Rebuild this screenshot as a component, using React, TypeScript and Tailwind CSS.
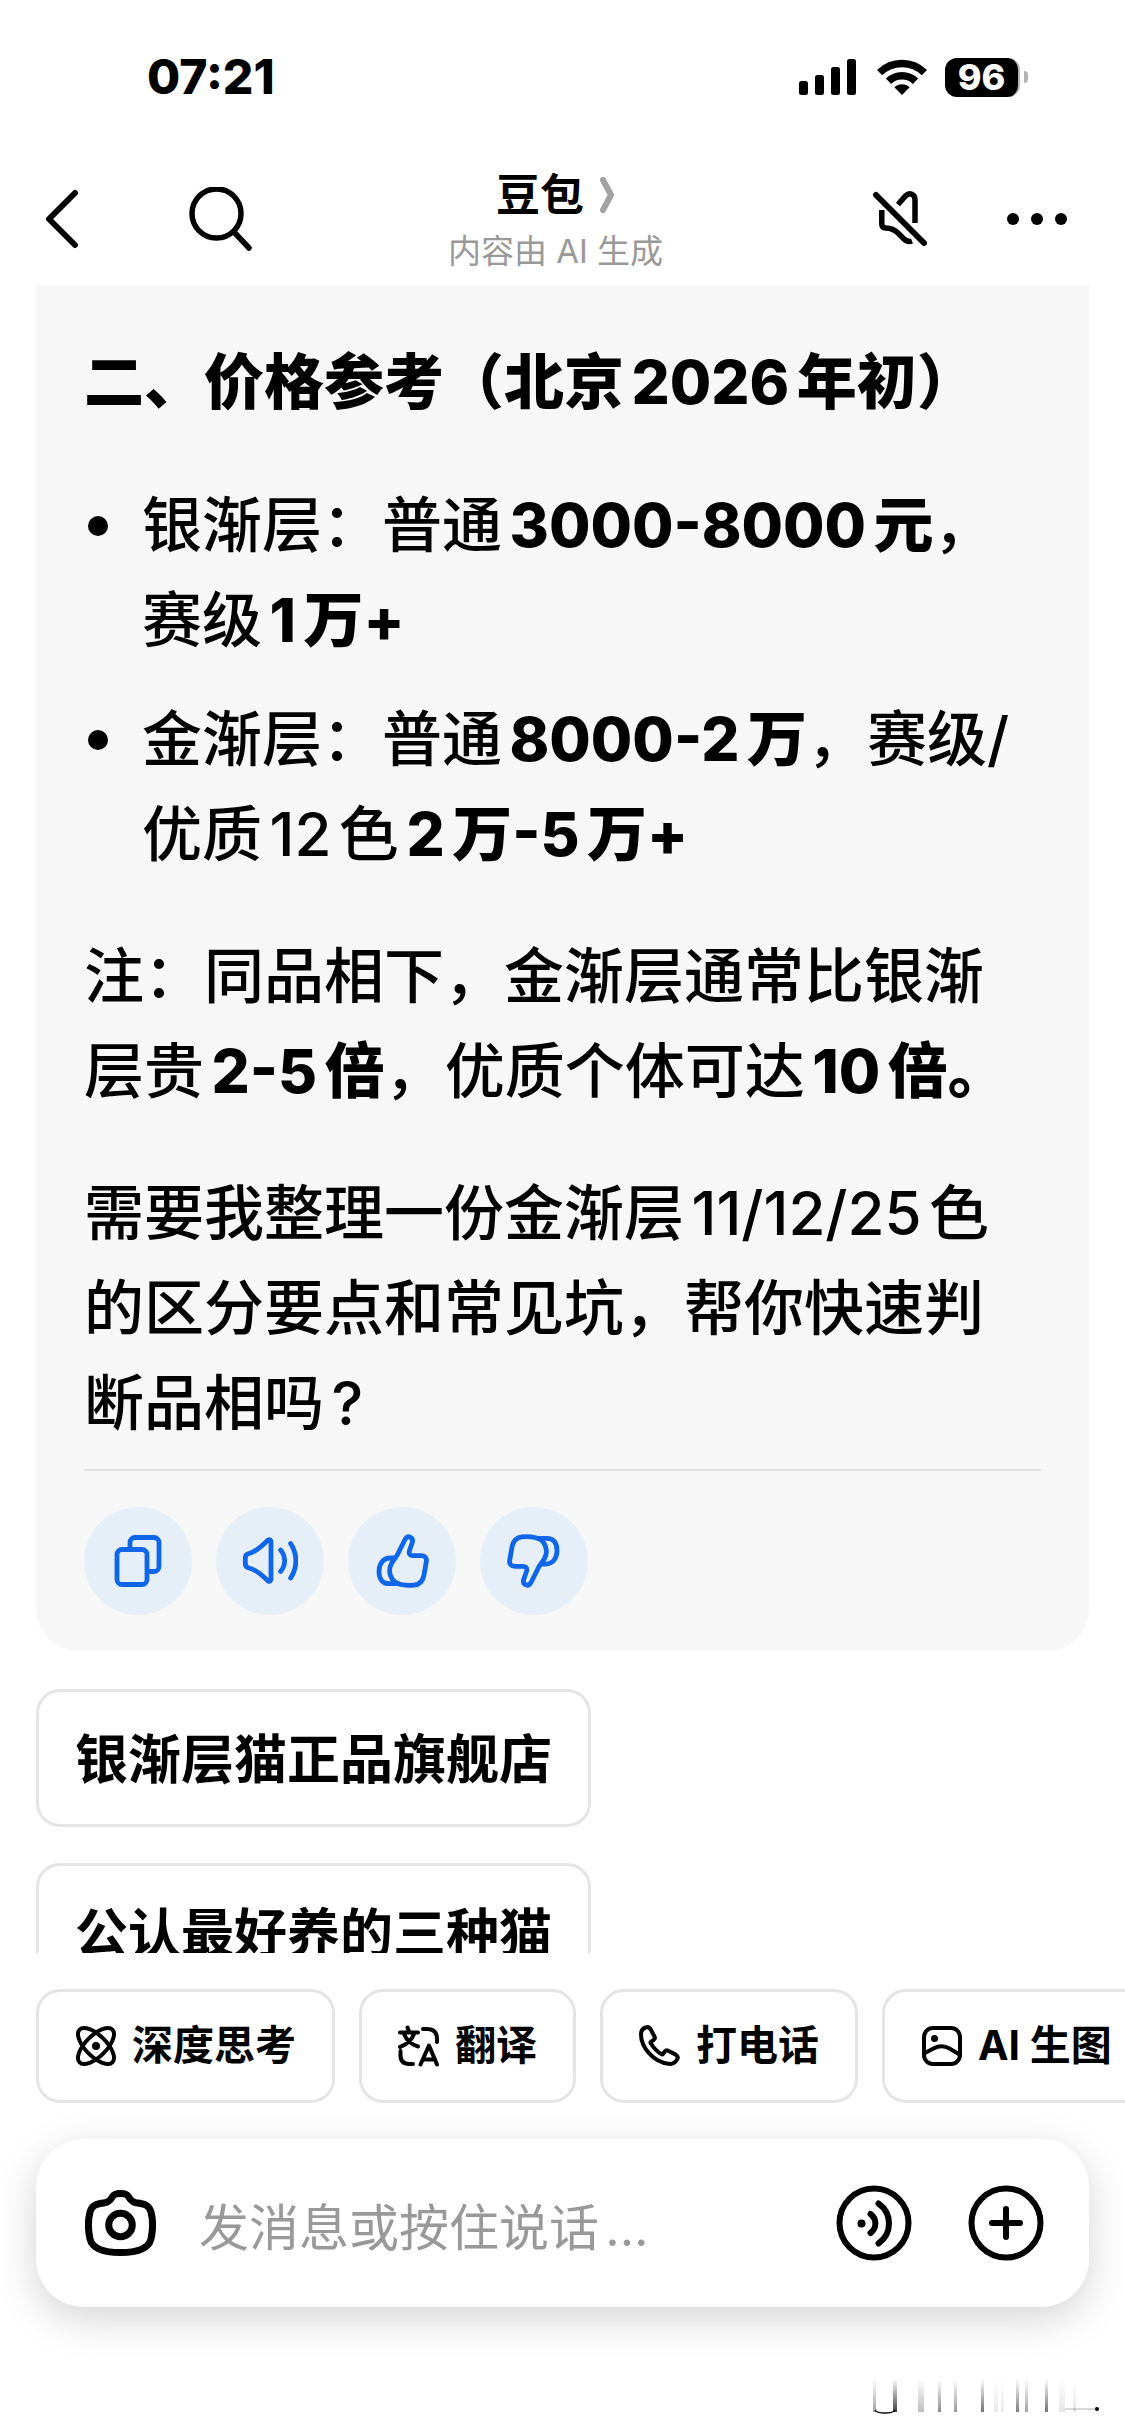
import type { ReactNode } from "react";

function StatusBar() {
  return (
    <div className="flex h-[154px] items-center justify-between pl-[147px] pr-[97px]">
      <span className="text-[48px] font-extrabold leading-none">07:21</span>
      <div className="flex items-center">
        <svg className="mr-5" width="58" height="36" viewBox="0 0 58 36">
          <rect x="0" y="22" width="9" height="14" rx="2.5" />
          <rect x="16" y="16" width="9" height="20" rx="2.5" />
          <rect x="32" y="8" width="9" height="28" rx="2.5" />
          <rect x="48" y="0" width="9" height="36" rx="2.5" />
        </svg>
        <svg className="mr-[18px]" width="50" height="36" viewBox="0 0 50 36">
          <path d="M25 36 17.3 28.3a11 11 0 0 1 15.4 0Z" />
          <path d="M11.5 22.3a19.3 19.3 0 0 1 27 0" fill="none" stroke="#000" strokeWidth="7.5" />
          <path d="M2.6 13.6a32 32 0 0 1 44.8 0" fill="none" stroke="#000" strokeWidth="7.5" />
        </svg>
        <div className="flex items-center">
          <span className="flex h-[39px] w-[75px] items-center justify-center rounded-[12px] border-r-2 border-[#b3b3b3] bg-black text-[36px] font-extrabold leading-none text-white">
            96
          </span>
          <span className="ml-1 h-3 w-1 rounded-r-full bg-[#b3b3b3]" />
        </div>
      </div>
    </div>
  );
}

function Header() {
  return (
    <header className="grid h-[131px] grid-cols-[1fr_auto_1fr] items-center pb-[2px] pl-[44px] pr-[58px]">
      <div className="flex items-center gap-[108px]">
        <button aria-label="返回">
          <svg width="36" height="60" viewBox="0 0 36 60" fill="none" stroke="#000" strokeWidth="6" strokeLinecap="round" strokeLinejoin="round">
            <path d="M31 4 5 30 31 56" />
          </svg>
        </button>
        <button aria-label="搜索">
          <svg width="64" height="64" viewBox="0 0 64 64" fill="none" stroke="#000" strokeWidth="5.5" strokeLinecap="round">
            <circle cx="28.5" cy="26.5" r="24.5" />
            <path d="m46 45 15 16" />
          </svg>
        </button>
      </div>
      <div className="flex flex-col items-center pt-2">
        <button className="flex items-center gap-4 text-[44px] font-bold leading-[56px]">
          豆包
          <svg width="15" height="36" viewBox="0 0 15 36" fill="none" stroke="#a3a3a3" strokeWidth="6" strokeLinecap="round" strokeLinejoin="round">
            <path d="m3 3 8 15-8 15" />
          </svg>
        </button>
        <p className="text-[33px] leading-[56px] text-[#999999]">内容由 AI 生成</p>
      </div>
      <div className="flex items-center justify-end gap-[80px]">
        <button aria-label="静音">
          <svg width="54" height="56" viewBox="0 0 54 56" fill="none" stroke="#000" strokeWidth="5.5">
            <path d="M3 4 51 52" strokeWidth="6" strokeLinecap="round" />
            <path d="m25 13.500 7.500-8.500c4-4 9.500-2 9.500 4V32" />
            <path d="M8.800 19v14c0 2.500 1.500 3.800 4.200 4 5.500.2 8 1.200 12 5l5.500 5.500c2.500 2.600 5 3.800 8.500 2.500" />
          </svg>
        </button>
        <button aria-label="更多">
          <svg width="60" height="12" viewBox="0 0 60 12">
            <circle cx="6" cy="6" r="6" />
            <circle cx="30" cy="6" r="6" />
            <circle cx="54" cy="6" r="6" />
          </svg>
        </button>
      </div>
    </header>
  );
}

function ActionIcon({ className, children }: { className?: string; children: ReactNode }) {
  return (
    <svg className={className} width="56" height="56" viewBox="0 0 56 56" fill="none" stroke="#0f66e8" strokeWidth="4.8" strokeLinecap="round" strokeLinejoin="round">
      {children}
    </svg>
  );
}

function ThumbIcon({ className }: { className?: string }) {
  return (
    <ActionIcon className={className}>
      <path d="M31 6.500c1.500-2.500 3.200-3.300 5.200-2.300 2.300 1 2.800 3 2 5.500L35.500 17.500c-1 3 .3 5.200 3.300 5.200H47c4 0 6 2.200 5.300 6L50 42c-1.300 6.500-4 9.800-10 10.200-4 .3-9 .2-13-.7-11-2-13.500-14-9.500-21 2-3.500 4-5.500 6-9Z" />
      <path d="M20 25h-3.500C8.500 25 5 31.500 5 38.500c0 7.500 3.500 12.200 10 12.200h9" />
    </ActionIcon>
  );
}

const actions = [
  {
    label: "复制",
    icon: (
      <ActionIcon>
        <rect x="7" y="16.5" width="30" height="35" rx="5" />
        <path d="M20 14V9.500a5 5 0 0 1 5-5h19a5 5 0 0 1 5 5v24a5 5 0 0 1-5 5h-5" />
      </ActionIcon>
    ),
  },
  {
    label: "朗读",
    icon: (
      <ActionIcon>
        <path d="M7 20.500C14 19 20 13 25.500 7.500 27 6 29 6.500 29 9v37c0 2.500-2 3-3.500 1.500C20 42 14 36.500 7 35c-2.500-.6-3.700-2-3.700-4.500V25c0-2.500 1.200-4 3.700-4.500Z" />
        <path d="M38.600 17c5.400 6.500 5.400 15 0 21.500M48.600 10.500c7 10.500 7 24 0 34.500" />
      </ActionIcon>
    ),
  },
  { label: "赞", icon: <ThumbIcon /> },
  { label: "踩", icon: <ThumbIcon className="rotate-180" /> },
];

function Bullet() {
  return (
    <span className="flex h-[95px] w-7 shrink-0 items-center justify-center">
      <span className="size-5 rounded-full bg-black" />
    </span>
  );
}

function Message() {
  return (
    <article className="shrink-0 rounded-b-[42px] bg-[#f7f7f7] px-12 pb-9 pt-[50px] text-[60px] font-medium leading-[95px]">
      <h2 className="font-extrabold">二、价格参考（北京2026年初）</h2>
      <ul className="mt-12 flex flex-col gap-6">
        <li className="flex gap-[30px]">
          <Bullet />
          <p>
            银渐层：普通<b className="font-extrabold">3000-8000元</b>，<br />
            赛级<b className="font-extrabold">1万+</b>
          </p>
        </li>
        <li className="flex gap-[30px]">
          <Bullet />
          <p>
            金渐层：普通<b className="font-extrabold">8000-2万</b>，赛级/<br />
            优质12色<b className="font-extrabold">2万-5万+</b>
          </p>
        </li>
      </ul>
      <p className="mt-[47px]">
        注：同品相下，金渐层通常比银渐层贵<b className="font-extrabold">2-5倍</b>，优质个体可达<b className="font-extrabold">10倍。</b>
      </p>
      <p className="mt-[47px]">
        需要我整理一份金渐层11/12/25色<br />
        的区分要点和常见坑，帮你快速判断品相吗?
      </p>
      <div className="mt-[18px] flex gap-6 border-t-2 border-[#e2e2e2] pt-9">
        {actions.map((action) => (
          <button key={action.label} aria-label={action.label} className="flex size-[108px] items-center justify-center rounded-full bg-[#e6eff8]">
            {action.icon}
          </button>
        ))}
      </div>
    </article>
  );
}

function ChipIcon({ children }: { children: ReactNode }) {
  return (
    <svg width="42" height="42" viewBox="0 0 42 42" fill="none" stroke="#000" strokeWidth="4" strokeLinecap="round" strokeLinejoin="round">
      {children}
    </svg>
  );
}

const chips = [
  {
    label: "深度思考",
    icon: (
      <svg width="42" height="42" viewBox="1.500 1.500 21 21" fill="none" stroke="#000" strokeWidth="2">
        <circle cx="12" cy="12" r="2" fill="#000" stroke="none" />
        <path d="M20.200 20.200c2.040-2.030.02-7.360-4.500-11.900-4.540-4.520-9.870-6.540-11.900-4.500-2.040 2.030-.02 7.360 4.500 11.900 4.540 4.520 9.870 6.540 11.900 4.500Z" />
        <path d="M15.700 15.700c4.520-4.540 6.540-9.870 4.500-11.900-2.030-2.040-7.360-.02-11.900 4.500-4.520 4.540-6.540 9.870-4.500 11.900 2.030 2.040 7.360.02 11.900-4.500Z" />
      </svg>
    ),
  },
  {
    label: "翻译",
    icon: (
      <ChipIcon>
        <path d="M9.500 2.500 10.500 5M2 7.500h18M16.500 8C14 14.500 9 19.500 2 22M6 9c2.500 6 7 10.500 14 12.500" />
        <path d="M25 4h4c6.500 0 10 3.500 10 10v3M2.500 26v4c0 6 3 9 8.500 9h4" />
        <path d="M22.500 39.500 31 20.500l8 19M25.500 34.500h11" />
      </ChipIcon>
    ),
  },
  {
    label: "打电话",
    icon: (
      <ChipIcon>
        <path d="M6.500 2.500C9 1.500 11 3 12 5l3.500 6.500c.8 1.500.3 2.500-.8 3.300l-2.800 2c-.5.4-.5 1 0 1.700 2.500 4 6 8 10.500 10.600.6.4 1.200.3 1.600-.2l2-2.600c.8-1 2-1.200 3.200-.5l7.500 3.800c2 1.200 2.500 3 1.500 4.800-1.500 2.600-4.500 4.900-8.500 4.400C14 37 2 22 2 9.500 2 6 3.500 3.500 6.500 2.500Z" />
      </ChipIcon>
    ),
  },
  {
    label: "AI 生图",
    icon: (
      <ChipIcon>
        <rect x="3" y="3" width="36" height="36" rx="9" />
        <circle cx="13.500" cy="13.500" r="3.500" fill="#000" stroke="none" />
        <path d="m3 28.500 9.500-5c6-3.200 10.500-3.200 16 0l10 6" />
      </ChipIcon>
    ),
  },
];

function Composer() {
  return (
    <div className="mx-9 flex h-[168px] items-center rounded-[48px] bg-white pl-[49px] pr-[45px] shadow-[0_12px_42px_rgba(0,0,0,0.17)]">
      <button aria-label="拍照">
        <svg width="71" height="66" viewBox="0 0 71 66" fill="none" stroke="#000" strokeWidth="7" strokeLinejoin="round">
          <path d="M27.500 6.500c1.500-2.500 3.500-3 8-3s6.500.5 8 3c2 4 3.500 5.500 7.500 6.200C60 14 64 15 66 22c2 8 2 18 0 27-2 8-10 13.500-30.500 13.500S7 57 5 49C3 40 3 30 5 22c2-7 6-8 15-9.300 4-.7 5.500-2.200 7.500-6.200Z" />
          <circle cx="35.500" cy="35" r="11.800" />
        </svg>
      </button>
      <input
        aria-label="发消息"
        placeholder="发消息或按住说话..."
        className="ml-[43px] mt-[10px] min-w-0 flex-1 bg-transparent text-[50px] leading-[72px] outline-none placeholder:text-[#999999]"
      />
      <button aria-label="语音" className="mr-14">
        <svg width="76" height="76" viewBox="0 0 76 76" fill="none" stroke="#000" strokeWidth="6" strokeLinecap="round">
          <circle cx="38" cy="38" r="34.500" />
          <circle cx="25.500" cy="38.500" r="4" fill="#000" stroke="none" />
          <path d="M34.500 29c6.500 5 6.500 14 0 19M42.500 18.500c14 10 14 30 0 40" />
        </svg>
      </button>
      <button aria-label="更多功能">
        <svg width="76" height="76" viewBox="0 0 76 76" fill="none" stroke="#000" strokeWidth="6" strokeLinecap="round">
          <circle cx="38" cy="38" r="34.500" />
          <path d="M38 24v28M24 38h28" />
        </svg>
      </button>
    </div>
  );
}

// x, width and opacity of each faded streak in the corner mark
const streaks = [
  [58, 3, 0.35],
  [78, 4, 0.75],
  [103, 6, 0.25],
  [123, 3, 0.45],
  [139, 3, 0.4],
  [166, 3, 0.55],
  [179, 4, 0.08],
  [186, 3, 0.08],
  [201, 3, 0.5],
  [210, 3, 0.35],
  [230, 3, 0.55],
  [244, 6, 0.1],
  [258, 3, 0.1],
];

function CornerMark() {
  return (
    <svg width="290" height="40" viewBox="0 0 290 40" aria-hidden="true">
      <defs>
        <linearGradient id="streak" x1="0" y1="0" x2="0" y2="1">
          <stop offset="0" stopColor="#000" stopOpacity="0" />
          <stop offset="1" stopColor="#000" />
        </linearGradient>
      </defs>
      {streaks.map(([x, width, opacity]) => (
        <rect key={x} x={x} y="4" width={width} height="33" fill="url(#streak)" opacity={opacity} />
      ))}
      <path d="M60 35c1 2 4 3 10 3s9-1 10-3" fill="none" stroke="#000" strokeWidth="1.500" />
      <path d="M250 34h30" stroke="#000" strokeOpacity="0.2" strokeWidth="1.500" />
      <circle cx="282" cy="34" r="2" />
    </svg>
  );
}

export default function App() {
  return (
    <div className="flex h-screen flex-col overflow-hidden bg-white font-['Inter','Noto_Sans_CJK_SC',sans-serif] text-black [text-autospace:normal]" lang="zh-CN">
      <StatusBar />
      <Header />
      <main className="flex min-h-0 flex-1 flex-col items-stretch overflow-hidden px-9">
        <Message />
        <div className="flex shrink-0 flex-col items-start gap-9 pt-[38px]">
          {["银渐层猫正品旗舰店", "公认最好养的三种猫"].map((text) => (
            <button key={text} className="h-[138px] rounded-[24px] border-[3px] border-[#e5e5e5] px-9 pt-1 text-[53px] font-bold leading-[72px]">
              {text}
            </button>
          ))}
        </div>
      </main>
      <footer className="shrink-0 pt-9">
        <div className="flex gap-6 overflow-hidden pl-9">
          {chips.map((chip) => (
            <button key={chip.label} className="flex h-[114px] shrink-0 items-center gap-[15px] whitespace-nowrap rounded-[24px] border-[3px] border-[#e5e5e5] px-9 text-[41px] font-bold">
              {chip.icon}
              {chip.label}
            </button>
          ))}
        </div>
        <div className="mt-9">
          <Composer />
        </div>
        <div className="mt-[68px] flex justify-end pb-[21px] pr-5">
          <CornerMark />
        </div>
      </footer>
    </div>
  );
}
